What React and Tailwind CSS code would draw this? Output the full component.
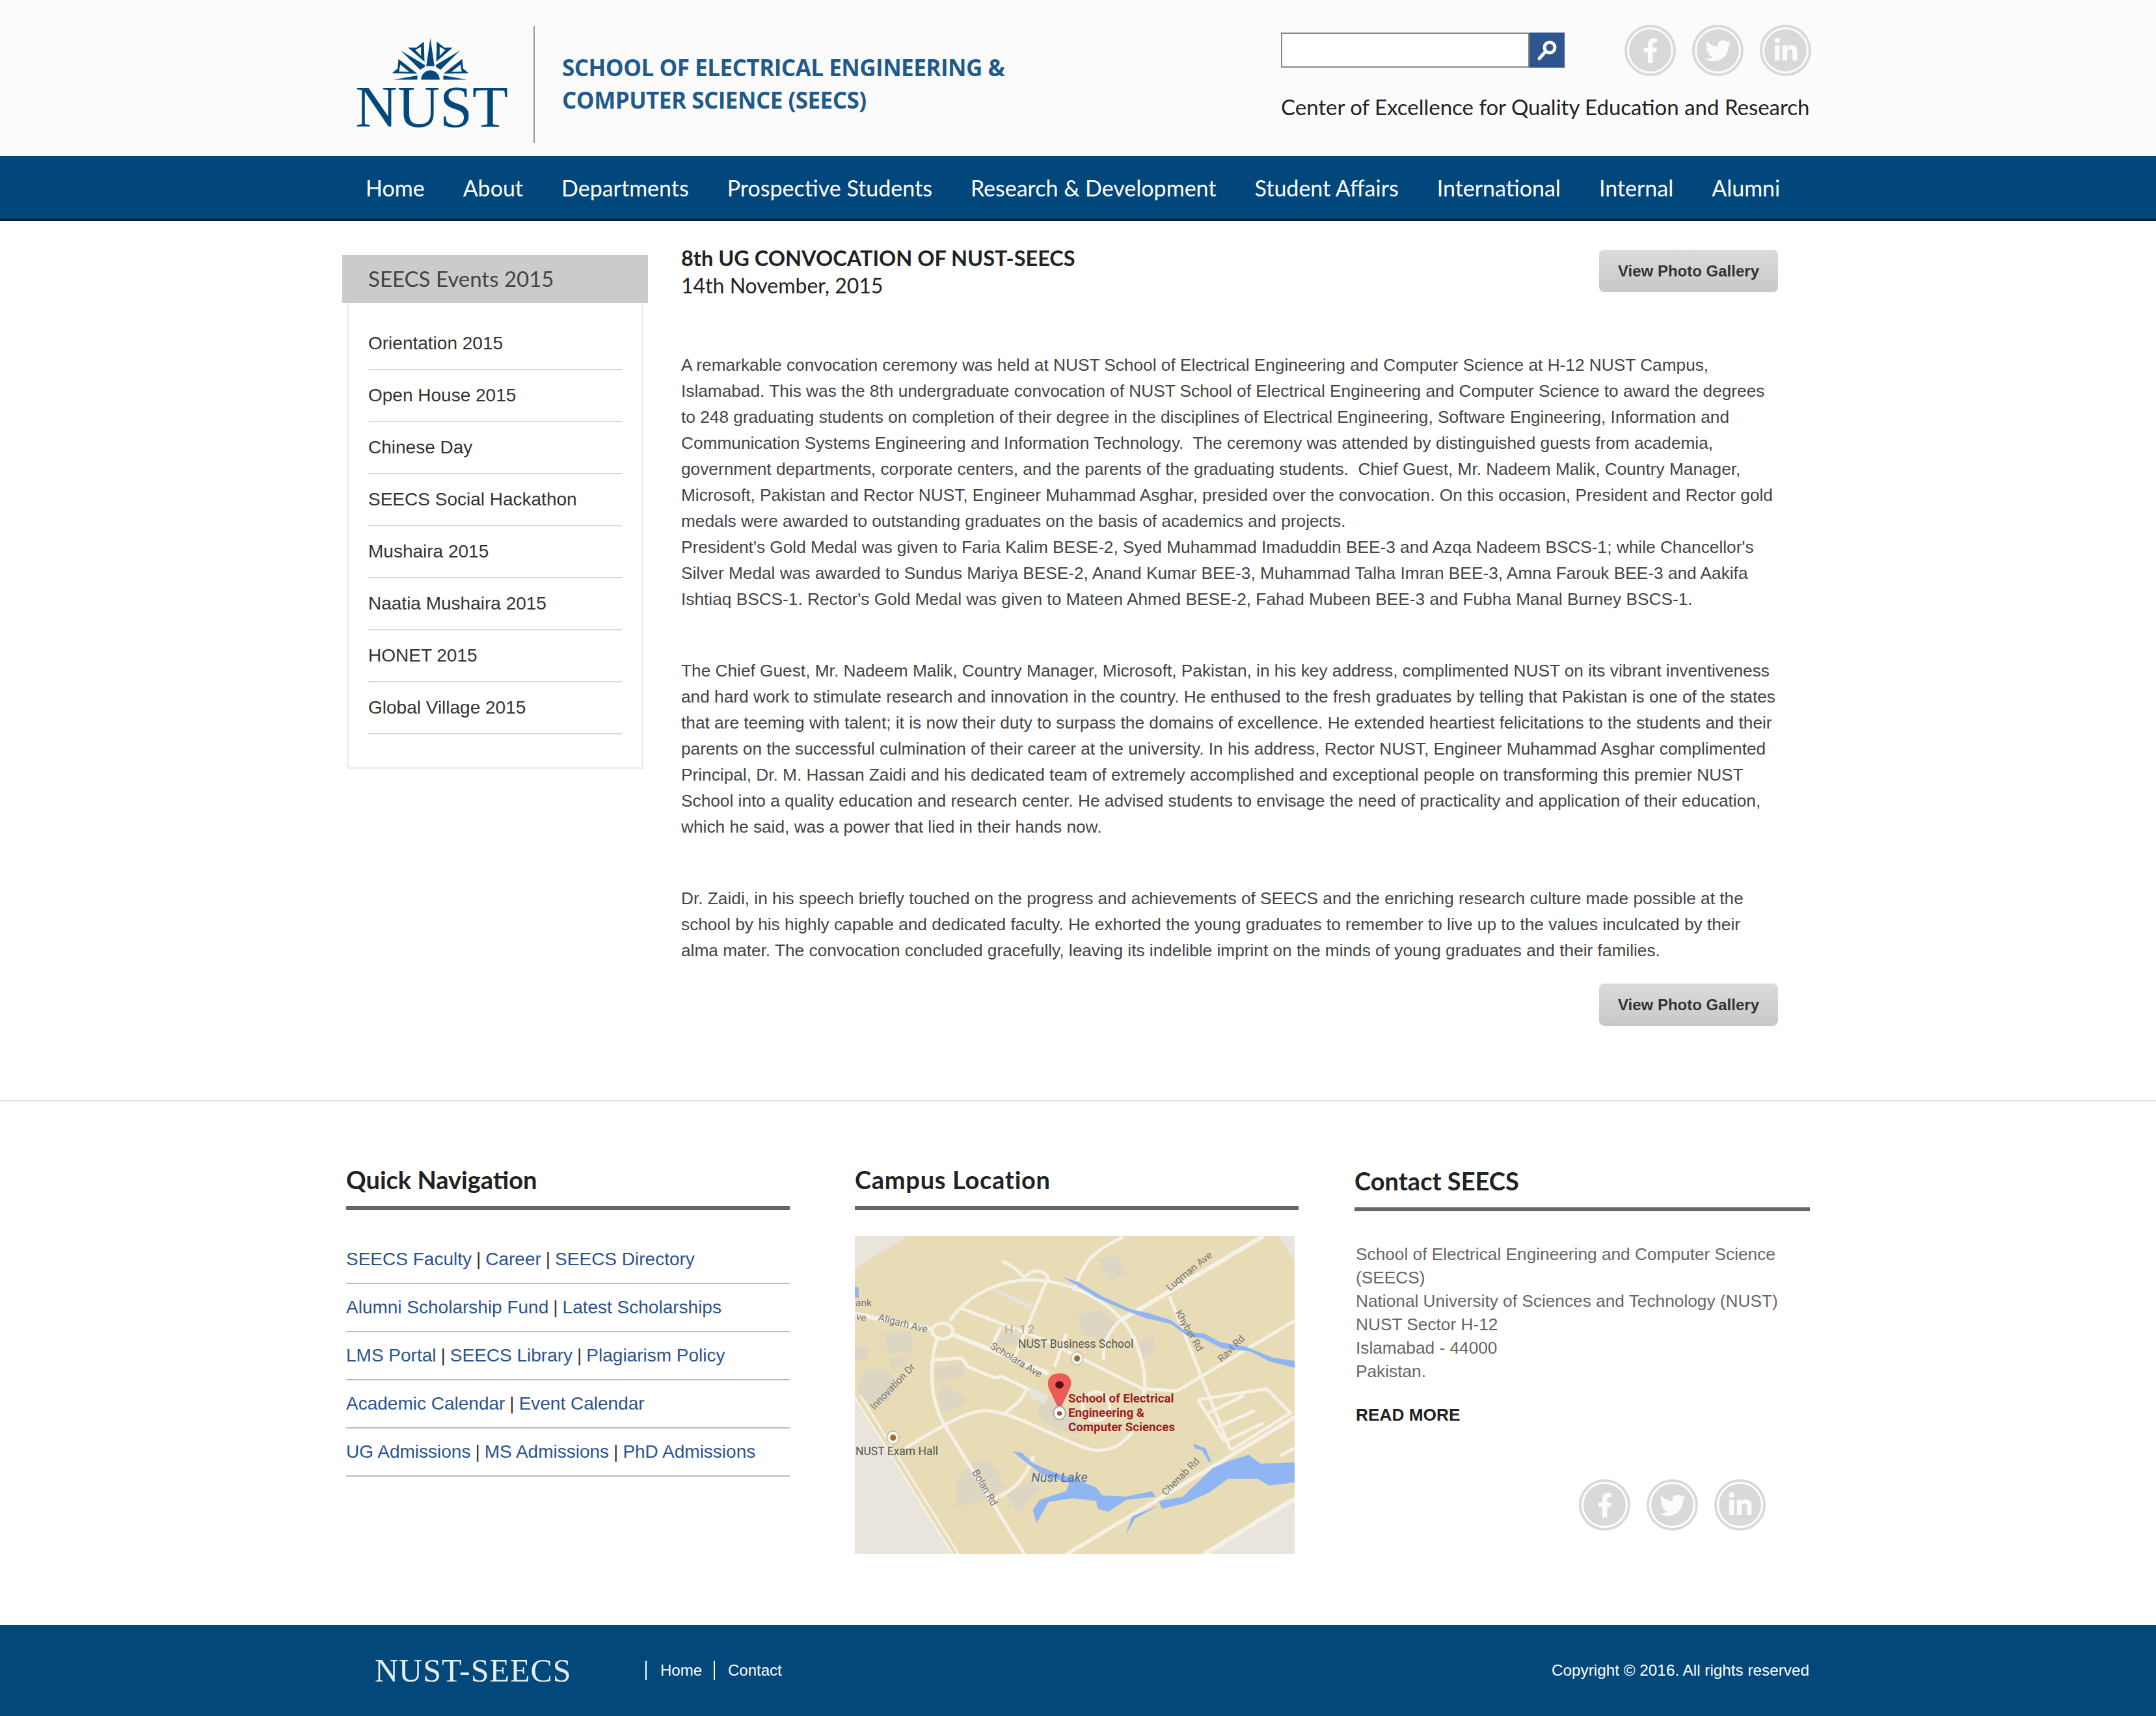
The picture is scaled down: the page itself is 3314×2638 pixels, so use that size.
import React from 'react';
import { FaFacebookF, FaTwitter, FaLinkedinIn } from 'react-icons/fa';

const sans = "font-['Liberation_Sans',Arial,sans-serif]";

const navItems = ['Home', 'About', 'Departments', 'Prospective Students', 'Research & Development', 'Student Affairs', 'International', 'Internal', 'Alumni'];

const events = ['Orientation 2015', 'Open House 2015', 'Chinese Day', 'SEECS Social Hackathon', 'Mushaira 2015', 'Naatia Mushaira 2015', 'HONET 2015', 'Global Village 2015'];

const quickLinks = [
  ['SEECS Faculty', 'Career', 'SEECS Directory'],
  ['Alumni Scholarship Fund', 'Latest Scholarships'],
  ['LMS Portal', 'SEECS Library', 'Plagiarism Policy'],
  ['Academic Calendar', 'Event Calendar'],
  ['UG Admissions', 'MS Admissions', 'PhD Admissions'],
];

const para1 = [
  'A remarkable convocation ceremony was held at NUST School of Electrical Engineering and Computer Science at H-12 NUST Campus,',
  'Islamabad. This was the 8th undergraduate convocation of NUST School of Electrical Engineering and Computer Science to award the degrees',
  'to 248 graduating students on completion of their degree in the disciplines of Electrical Engineering, Software Engineering, Information and',
  'Communication Systems Engineering and Information Technology.  The ceremony was attended by distinguished guests from academia,',
  'government departments, corporate centers, and the parents of the graduating students.  Chief Guest, Mr. Nadeem Malik, Country Manager,',
  'Microsoft, Pakistan and Rector NUST, Engineer Muhammad Asghar, presided over the convocation. On this occasion, President and Rector gold',
  'medals were awarded to outstanding graduates on the basis of academics and projects.',
  "President's Gold Medal was given to Faria Kalim BESE-2, Syed Muhammad Imaduddin BEE-3 and Azqa Nadeem BSCS-1; while Chancellor's",
  "Silver Medal was awarded to Sundus Mariya BESE-2, Anand Kumar BEE-3, Muhammad Talha Imran BEE-3, Amna Farouk BEE-3 and Aakifa",
  "Ishtiaq BSCS-1. Rector's Gold Medal was given to Mateen Ahmed BESE-2, Fahad Mubeen BEE-3 and Fubha Manal Burney BSCS-1.",
];

const para2 = [
  'The Chief Guest, Mr. Nadeem Malik, Country Manager, Microsoft, Pakistan, in his key address, complimented NUST on its vibrant inventiveness',
  'and hard work to stimulate research and innovation in the country. He enthused to the fresh graduates by telling that Pakistan is one of the states',
  'that are teeming with talent; it is now their duty to surpass the domains of excellence. He extended heartiest felicitations to the students and their',
  'parents on the successful culmination of their career at the university. In his address, Rector NUST, Engineer Muhammad Asghar complimented',
  'Principal, Dr. M. Hassan Zaidi and his dedicated team of extremely accomplished and exceptional people on transforming this premier NUST',
  'School into a quality education and research center. He advised students to envisage the need of practicality and application of their education,',
  'which he said, was a power that lied in their hands now.',
];

const para3 = [
  'Dr. Zaidi, in his speech briefly touched on the progress and achievements of SEECS and the enriching research culture made possible at the',
  'school by his highly capable and dedicated faculty. He exhorted the young graduates to remember to live up to the values inculcated by their',
  'alma mater. The convocation concluded gracefully, leaving its indelible imprint on the minds of young graduates and their families.',
];

function Emblem() {
  const half = (
    <>
      <polygon points="78,83 190,150 188,160 168,172" />
      <path fillRule="evenodd" d="M185 42 L188 135 L112 70 L150 70 Z M172 66 L172 108 L146 80 Z" />
      <path fillRule="evenodd" d="M68 122 L155 190 L38 188 L64 166 Z M76 148 L118 182 L70 180 Z" />
      <polygon points="45,218 155,198 155,218" />
    </>
  );
  return (
    <svg viewBox="0 0 430 240" className="w-[143px] h-[80px] ml-[-4px]" fill="#03487c">
      <polygon points="215,25 234,155 196,155" />
      {half}
      <g transform="translate(430,0) scale(-1,1)">{half}</g>
      <path d="M172 218 A43 43 0 0 1 258 218 Z" />
    </svg>
  );
}

function Social({ className = '' }) {
  const icons = [FaFacebookF, FaTwitter, FaLinkedinIn];
  return (
    <div className={`flex gap-[25px] ${className}`}>
      {icons.map((Icon, i) => (
        <div key={i} className="w-[79px] h-[79px] rounded-full border-[4px] border-[#d9d9d9] p-[3px]">
          <div className="w-full h-full rounded-full bg-[#d9d9d9] flex items-center justify-center text-[#fbfbfb]">
            <Icon size={i === 0 ? 38 : 40} />
          </div>
        </div>
      ))}
    </div>
  );
}

function GalleryButton({ className = '' }) {
  return (
    <a className={`w-[275px] h-[65px] rounded-[8px] bg-gradient-to-b from-[#dcdbdb] to-[#c8c8c8] flex items-center justify-center text-[24px] font-bold text-[#333] ${sans} ${className}`}>
      View Photo Gallery
    </a>
  );
}

function Paragraph({ lines, className = '' }) {
  return (
    <p className={`text-[26.25px] leading-[40px] text-[#444] whitespace-pre ${className}`}>
      {lines.map((l) => (
        <span key={l} className="block">{l}</span>
      ))}
    </p>
  );
}

function FooterHeading({ children, className = '' }) {
  return (
    <div className={`border-b-[6px] border-[#666] flex items-end pb-[19px] ${className}`}>
      <h3 className="font-['Lato',sans-serif] font-bold text-[38px] leading-[44px] text-[#222]">{children}</h3>
    </div>
  );
}

function CampusMap() {
  return (
    <svg viewBox="0 0 676 489" className="w-[676px] h-[489px] block mt-[40px]">
      <rect width="676" height="489" fill="#e8dcb6" />
      <g transform="scale(0.4592 0.3381) translate(-52 -65)">
        <polygon points="52,65 230,65 52,215" fill="#e9e5dc" />
        <polygon points="52,800 380,1513 52,1513" fill="#e9e5dc" />
        <polygon points="1524,1250 1220,1513 1524,1513" fill="#e9e5dc" />
        <polygon points="1470,65 1524,65 1524,180" fill="#e9e5dc" />

        <g fill="#dcd6c2">
          <polygon points="860,170 930,150 965,240 905,265" />
          <polygon points="150,510 240,495 245,590 165,600" />
          <polygon points="52,570 100,570 95,630 52,630" />
          <polygon points="170,620 220,610 220,660 175,665" />
          <ellipse cx="125" cy="750" rx="62" ry="82" />
          <polygon points="320,670 415,640 415,700 325,730" />
          <polygon points="330,750 360,745 415,800 415,840 340,870" />
          <polygon points="800,420 880,400 930,470 880,540 810,510" />
          <polygon points="1000,560 1050,515 1060,590 1010,625" />
          <polygon points="540,500 600,520 590,560 525,560" />
          <polygon points="660,860 700,790 740,830 830,960 760,960 680,910" />
          <polygon points="460,1080 510,1090 555,1210 500,1260 390,1300 390,1180" />
          <polygon points="560,1240 640,1180 680,1210 600,1320" />
          <polygon points="510,300 650,380 640,400 520,320" fill="#e4e3de" />
          <polygon points="630,750 700,790 690,830 640,800" fill="#e4e3de" />
        </g>

        <g fill="none" stroke="#f5f1e6" strokeWidth="5">
          <path vectorEffect="non-scaling-stroke" d="M370 450 C430 330 540 265 640 265 C780 265 950 380 995 560 C1030 680 1025 760 1015 800" />
          <path vectorEffect="non-scaling-stroke" d="M330 520 C300 640 300 800 350 920 L620 1513" />
          <circle vectorEffect="non-scaling-stroke" cx="345" cy="497" r="35" />
          <path vectorEffect="non-scaling-stroke" d="M52 420 L310 490" strokeWidth="7" />
          <path vectorEffect="non-scaling-stroke" d="M400 390 L690 540 L1015 760 L1130 770 L1524 450" />
          <path vectorEffect="non-scaling-stroke" d="M375 510 L700 690" strokeWidth="7" />
          <path vectorEffect="non-scaling-stroke" d="M940 450 L1420 65" strokeWidth="7" />
          <path vectorEffect="non-scaling-stroke" d="M1105 340 L1310 1040" />
          <path vectorEffect="non-scaling-stroke" d="M700 250 L585 620" />
          <path vectorEffect="non-scaling-stroke" d="M785 315 C820 180 840 140 950 70" />
          <path vectorEffect="non-scaling-stroke" d="M545 180 C600 210 610 250 620 255 C650 210 680 220 700 250" />
          <path vectorEffect="non-scaling-stroke" d="M540 480 L510 570 M720 660 L760 510 M885 630 C880 560 900 500 940 450" />
          <path vectorEffect="non-scaling-stroke" d="M310 630 L410 620 L430 660 L520 710 L545 705 L630 760 L600 820 L555 870" />
          <path vectorEffect="non-scaling-stroke" d="M220 1030 C320 950 430 850 500 860 C620 880 780 1030 860 1040 C930 1040 950 1000 980 960" />
          <path vectorEffect="non-scaling-stroke" d="M52 800 L380 1513 M70 790 L400 1513" strokeWidth="3" />
          <path vectorEffect="non-scaling-stroke" d="M760 1513 L1524 890" strokeWidth="6" />
          <path vectorEffect="non-scaling-stroke" d="M1220 1513 L1524 1260" strokeWidth="7" />
          <path vectorEffect="non-scaling-stroke" d="M1200 810 L1430 760 L1510 870 L1310 1040 M1200 810 L1290 1000 M1235 870 L1355 790 M1265 935 L1390 860 M1290 1000 L1420 915" />
          <path vectorEffect="non-scaling-stroke" d="M650 1065 C630 1150 590 1220 520 1260" />
          <path vectorEffect="non-scaling-stroke" d="M1475 1065 L1524 1030" />
          <ellipse vectorEffect="non-scaling-stroke" cx="860" cy="840" rx="45" ry="65" />
        </g>

        <g fill="#8fb5f3">
          <path d="M52 295 L65 300 L65 345 L52 345 Z" />
          <path d="M745 250 L800 275 L880 340 L975 398 L1040 418 L1110 448 L1165 503 L1220 508 L1275 548 L1360 568 L1450 618 L1524 633 L1524 665 L1440 635 L1375 590 L1280 575 L1215 530 L1165 520 L1110 465 L1030 440 L960 405 L860 345 L790 285 Z" />
          <path d="M580 1045 L610 1050 L650 1100 L720 1140 L790 1170 L860 1210 L880 1245 L960 1250 L1045 1225 L1060 1250 L960 1265 L900 1320 L865 1305 L860 1270 L780 1258 L700 1275 L660 1370 L648 1310 L670 1265 L760 1225 L770 1190 L680 1150 L630 1100 Z" />
          <path d="M1070 1270 L1150 1250 L1250 1120 L1300 1090 L1370 1060 L1410 1100 L1524 1095 L1524 1185 L1440 1200 L1400 1170 L1300 1170 L1240 1230 L1160 1280 L1080 1305 Z" />
          <path d="M1185 1010 L1225 1030 L1245 1090 L1238 1095 L1215 1040 L1190 1030 Z" />
          <path d="M1070 1290 L980 1340 L958 1425 L990 1350 Z" />
        </g>

        <path d="M737 690 C700 690 690 730 705 770 L737 860 L768 770 C785 730 775 690 737 690 Z" fill="#ee5b56" />
        <ellipse cx="737" cy="742" rx="14" ry="17" fill="#5a0f10" />
        <ellipse cx="737" cy="870" rx="20" ry="30" fill="#fff" stroke="#aaa" strokeWidth="2" vectorEffect="non-scaling-stroke" />
        <ellipse cx="737" cy="872" rx="8" ry="11" fill="#9b5a33" />
        <ellipse cx="796" cy="622" rx="20" ry="30" fill="#f7f3e6" stroke="#999" strokeWidth="1" vectorEffect="non-scaling-stroke" />
        <ellipse cx="796" cy="622" rx="10" ry="14" fill="#9b6a3c" />
        <ellipse cx="180" cy="982" rx="20" ry="30" fill="#f7f3e6" stroke="#999" strokeWidth="1" vectorEffect="non-scaling-stroke" />
        <ellipse cx="180" cy="982" rx="10" ry="14" fill="#9b6a3c" />
      </g>

      <g fontFamily="Roboto, sans-serif">
        <g fill="#555" fontSize="17.5">
          <text x="230" y="150" fill="#aaa69a" fontSize="19" letterSpacing="2">H-12</text>
          <text x="251" y="172">NUST Business School</text>
          <text x="1" y="337">NUST Exam Hall</text>
        </g>
        <g fill="#777" fontSize="15.5">
          <text x="1" y="108">ank</text>
          <text transform="translate(1 128) rotate(14)">ve</text>
          <text transform="translate(35 130) rotate(14)">Aligarh Ave</text>
          <text transform="translate(207 172) rotate(31)">Scholara Ave</text>
          <text transform="translate(30 268) rotate(-46)">Innovation Dr</text>
          <text transform="translate(484 85) rotate(-39)">Luqman Ave</text>
          <text transform="translate(492 118) rotate(60)">Khyber Rd</text>
          <text transform="translate(564 195) rotate(-45)">Ravi Rd</text>
          <text transform="translate(180 363) rotate(60)">Bolan Rd</text>
          <text transform="translate(478 400) rotate(-45)">Chenab Rd</text>
        </g>
        <text x="271" y="378" fill="#4f6f9f" fontSize="20" fontStyle="italic">Nust Lake</text>
        <g fill="#9c1c26" fontSize="18.7" fontWeight="bold">
          <text x="328" y="256">School of Electrical</text>
          <text x="328" y="278">Engineering &amp;</text>
          <text x="328" y="300">Computer Sciences</text>
        </g>
      </g>
    </svg>
  );
}

export default function App() {
  return (
    <div className={`w-[3314px] bg-white ${sans}`}>
      {/* top band */}
      <header className="h-[240px] bg-[#fbfbfb] pl-[546px] flex">
        <div className="w-[235px] pt-[50px] flex flex-col items-center">
          <Emblem />
          <div className="font-['Liberation_Serif',serif] text-[90px] leading-[72px] mt-[-1px] text-[#03487c]">NUST</div>
        </div>
        <div className="ml-[39px] mt-[40px] w-[2px] h-[180px] bg-[#999]" />
        <div className="ml-[42px] mt-[79px] font-['Open_Sans',sans-serif] font-bold text-[35px] leading-[50px] text-[#1f5a8c] tracking-[-0.5px] w-[900px]">
          SCHOOL OF ELECTRICAL ENGINEERING &amp;<br />COMPUTER SCIENCE (SEECS)
        </div>
        <div className="ml-[205px] w-[830px]">
          <div className="flex mt-[38px]">
            <div className="flex mt-[12px]">
              <div className="w-[382px] h-[54px] bg-white border-2 border-[#888]" />
              <div className="w-[54px] h-[54px] bg-[#2f558f] flex items-center justify-center">
                <svg viewBox="0 0 32 32" className="w-[32px] h-[32px]" fill="none" stroke="#fff">
                  <circle cx="20" cy="12" r="8" strokeWidth="5" />
                  <path d="M13 19 L4 29" strokeWidth="5" strokeLinecap="round" />
                </svg>
              </div>
            </div>
            <Social className="ml-[92px]" />
          </div>
          <div className="mt-[25px] font-['Lato',sans-serif] text-[33px] leading-[44px] text-[#222] whitespace-nowrap">
            Center of Excellence for Quality Education and Research
          </div>
        </div>
      </header>

      <nav className="h-[100px] bg-[#02477b] border-b-[4px] border-[#00233d] pl-[562px] flex items-center gap-[59px] font-['Lato',sans-serif] text-[34px] text-white whitespace-nowrap">
        {navItems.map((n) => (
          <a key={n}>{n}</a>
        ))}
      </nav>

      {/* main content */}
      <main className="flex pl-[526px] pr-[581px] h-[1353px] border-b-2 border-[#ddd]">
        <aside className="w-[470px] pt-[52px] shrink-0">
          <div className="h-[74px] bg-[#cbcbcb] pl-[40px] flex items-center font-['Lato',sans-serif] text-[33px] text-[#444]">SEECS Events 2015</div>
          <ul className="mx-[7px] h-[716px] border-[3px] border-t-0 border-[#eeeeee] px-[30px] pt-[23px]">
            {events.map((e) => (
              <li key={e} className="h-[80px] border-b-2 border-[#d8d8d8] flex items-center text-[28px] text-[#333]">
                {e}
              </li>
            ))}
          </ul>
        </aside>
        <section className="ml-[51px] flex-1 min-w-0">
          <div className="flex justify-between items-start pt-[32px]">
            <div className="font-['Lato',sans-serif] text-[32.5px] text-[#222] leading-[42px] pt-[4px]">
              <h1 className="font-bold">8th UG CONVOCATION OF NUST-SEECS</h1>
              <div className="text-[32px]">14th November, 2015</div>
            </div>
            <GalleryButton className="mt-[12px]" />
          </div>
          <Paragraph lines={para1} className="mt-[81px]" />
          <Paragraph lines={para2} className="mt-[70px]" />
          <Paragraph lines={para3} className="mt-[70px]" />
          <div className="flex justify-end mt-[31px]">
            <GalleryButton />
          </div>
        </section>
      </main>

      {/* footer columns */}
      <section className="h-[805px] pl-[532px] flex">
        <div className="w-[682px]">
          <FooterHeading className="h-[167px]">Quick Navigation</FooterHeading>
          <ul className="mt-[40px]">
            {quickLinks.map((row) => (
              <li key={row[0]} className="h-[74px] border-b-2 border-[#bbb] flex items-center text-[28px] text-[#2b5390]">
                {row.map((link, i) => (
                  <React.Fragment key={link}>
                    {i > 0 && <span className="text-[#333] mx-[7px]">|</span>}
                    <a>{link}</a>
                  </React.Fragment>
                ))}
              </li>
            ))}
          </ul>
        </div>
        <div className="ml-[100px] w-[682px]">
          <FooterHeading className="h-[167px] tracking-[0.7px]">Campus Location</FooterHeading>
          <CampusMap />
        </div>
        <div className="ml-[86px] w-[700px]">
          <FooterHeading className="h-[169px]">Contact SEECS</FooterHeading>
          <div className="pl-[2px] pt-[48px] text-[26.25px] leading-[36px] text-[#666]">
            School of Electrical Engineering and Computer Science<br />
            (SEECS)<br />
            National University of Sciences and Technology (NUST)<br />
            NUST Sector H-12<br />
            Islamabad - 44000<br />
            Pakistan.
          </div>
          <div className="pl-[2px] mt-[31px] text-[26.25px] leading-[36px] font-bold text-[#222]">READ MORE</div>
          <Social className="ml-[345px] mt-[81px]" />
        </div>
      </section>

      {/* bottom bar */}
      <footer className="h-[140px] bg-[#03487a] pl-[576px] flex items-center text-white">
        <div className="w-[300px] font-['Liberation_Serif',serif] text-[50px] text-[#e6edf3] whitespace-nowrap tracking-[1px]">NUST-SEECS</div>
        <div className="ml-[116px] flex text-[24px] leading-[30px]">
          <a className="border-l-2 border-white pl-[21px] pr-[18px]">Home</a>
          <a className="border-l-2 border-white pl-[20px]">Contact</a>
        </div>
        <div className="ml-auto mr-[533px] text-[24.3px]">Copyright © 2016. All rights reserved</div>
      </footer>
    </div>
  );
}
